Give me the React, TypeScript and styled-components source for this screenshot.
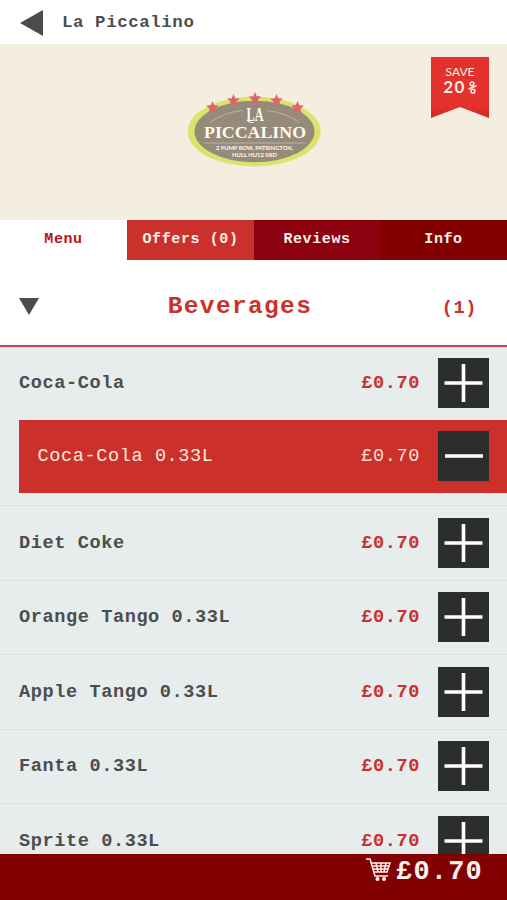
import React from 'react';
import styled, { createGlobalStyle, css } from 'styled-components';

const Global = createGlobalStyle`
  * { box-sizing: border-box; }
  body { margin: 0; background: #fff; }
  button { border: 0; padding: 0; font: inherit; }
`;

const Screen = styled.div`
  width: 507px;
  height: 900px;
  display: flex;
  flex-direction: column;
  overflow: hidden;
  font-family: "Liberation Mono", monospace;
  font-weight: 700;
  color: #4b4e4d;
`;

const Header = styled.header`
  flex: none;
  height: 43.5px;
  padding: 2px 0 0 20px;
  display: flex;
  align-items: center;
  gap: 19px;
  font-size: 17.4px;
  letter-spacing: 0.6px;
  background: #fff;
`;

const BackIcon = styled.svg`
  width: 23px;
  height: 26px;
`;

const Hero = styled.section`
  flex: none;
  height: 176px;
  background: #f4eee0;
  position: relative;
`;

const Logo = styled.svg`
  display: block;
  width: 150px;
  height: 90px;
  margin: 0 auto;
  transform: translate(1.5px, 41.5px);
`;

const Ribbon = styled.div`
  position: absolute;
  top: 13.5px;
  right: 18px;
  width: 58px;
  height: 61px;
  padding-top: 8px;
  display: flex;
  flex-direction: column;
  align-items: center;
  color: #ffece4;
  background: linear-gradient(#e3322d 78%, #d02a27);
  clip-path: polygon(0 0, 100% 0, 100% 100%, 50% 82%, 0 100%);
`;

const RibbonLabel = styled.span`
  font: 400 12px/14px Lato, "Noto Sans", sans-serif;
`;

const RibbonValue = styled.span`
  display: flex;
  align-items: center;
  gap: 2px;
  margin-top: 1px;
  font: 700 17px/14px Lato, "Noto Sans", sans-serif;
  letter-spacing: 1.5px;
`;

const PercentIcon = styled.svg`
  width: 9px;
  height: 13px;
`;

const Tabs = styled.nav`
  flex: none;
  height: 40.5px;
  display: grid;
  grid-template-columns: 127px 127px 126px 127px;
`;

const Tab = styled.button<{ $bg: string; $active?: boolean }>`
  background: ${p => p.$bg};
  color: ${p => (p.$active ? '#bd1024' : '#fff0eb')};
  font-family: inherit;
  font-size: 15px;
  letter-spacing: 0.6px;
  font-weight: 700;
  padding-bottom: 1px;
`;

const Category = styled.section`
  flex: none;
  height: 87px;
  padding: 9px 30px 0 19px;
  display: grid;
  grid-template-columns: 60px 1fr 48px;
  align-items: center;
  background: #fff;
  border-bottom: 2px solid #c74554;
  color: #cb312b;
`;

const DownIcon = styled.svg`
  width: 20px;
  height: 18px;
`;

const CategoryTitle = styled.h1`
  margin: 0;
  padding-right: 28px;
  text-align: center;
  font-size: 24.5px;
  letter-spacing: 1.35px;
  line-height: 30px;
`;

const Count = styled.span`
  font-size: 18.6px;
  letter-spacing: 0.6px;
  text-align: right;
  margin-top: 3px;
  white-space: nowrap;
`;

const List = styled.main`
  flex: 1;
  min-height: 0;
  overflow: hidden;
  background: #e7ecec;
`;

const Item = styled.section`
  border-bottom: 1.5px solid #dce0e1;
`;

const Row = styled.div<{ $selected?: boolean; $first?: boolean }>`
  display: grid;
  grid-template-columns: 1fr auto 51px;
  align-items: center;
  column-gap: 18px;
  height: ${p => (p.$first ? '73px' : '73.5px')};
  padding: 0 18px ${p => (p.$first ? '1px' : '0')} 19px;
  font-size: 18.6px;
  letter-spacing: 0.58px;
  ${p => p.$selected && css`
    margin: 0 0 12px 19px;
    padding-left: 18.5px;
    background: #cb302b;
    color: #ffe8e0;
    font-weight: 400;
  `}
`;

const Name = styled.span`
  padding-top: 1px;
  white-space: nowrap;
`;

const Price = styled.span<{ $light?: boolean }>`
  padding-top: 1px;
  color: ${p => (p.$light ? '#ffdfd6' : '#cb312b')};
`;

const Quantity = styled.button`
  width: 51px;
  height: 50px;
  background: #2c2d2d;
  display: flex;
  align-items: center;
  justify-content: center;
`;

const Footer = styled.footer`
  flex: none;
  height: 46px;
  padding: 3px 24px 0 0;
  display: flex;
  justify-content: flex-end;
  gap: 5px;
  background: #820001;
  color: #fff2ee;
`;

const CartIcon = styled.svg`
  width: 25px;
  height: 24px;
  margin-top: 1px;
`;

const Total = styled.span`
  font-size: 27px;
  letter-spacing: 1.2px;
  line-height: 31px;
`;

const starPoints = '0,-6.5 1.8,-2.2 6.4,-2 2.9,1.2 4,5.8 0,3.4 -4,5.8 -2.9,1.2 -6.4,-2 -1.8,-2.2';
const stars = [[32, 22], [53, 15], [74.5, 13], [96, 15], [117, 22]];

const Brand = () => (
  <Logo viewBox="0 0 150 90">
    <ellipse cx="73.7" cy="46" rx="66.5" ry="35" fill="#dbe36d" />
    <ellipse cx="74" cy="46" rx="60" ry="30.8" fill="#968b7b" />
    <path d="M29 37 Q43 27 62 25 M86 25 Q105 27 119 37 M24 57.5H125" fill="none" stroke="#c5baa9" strokeWidth=".8" />
    {stars.map(([x, y]) => (
      <polygon key={x} points={starPoints} transform={`translate(${x} ${y})`} fill="#dc6670" />
    ))}
    <g fill="#fffaf0" textAnchor="middle" fontWeight="700">
      <text x="74.5" y="35" fontFamily="Liberation Serif, serif" fontSize="18" textLength="17" lengthAdjust="spacingAndGlyphs">LA</text>
      <path d="M67 34 Q67 37.5 73 37" fill="none" stroke="#fffaf0" strokeWidth="1" />
      <text x="74.5" y="52.5" fontFamily="Liberation Serif, serif" fontSize="17.5" textLength="102" lengthAdjust="spacingAndGlyphs">PICCALINO</text>
      <text x="74" y="64.5" fontFamily="Lato, sans-serif" fontSize="6.2" textLength="77" lengthAdjust="spacingAndGlyphs">2 PUMP ROW, PATRINGTON,</text>
      <text x="74" y="71.5" fontFamily="Lato, sans-serif" fontSize="6.2" textLength="45" lengthAdjust="spacingAndGlyphs">HULL HU12 0RD</text>
    </g>
  </Logo>
);

const QuantityButton = ({ minus = false }: { minus?: boolean }) => (
  <Quantity aria-label={minus ? 'Remove' : 'Add'}>
    <svg width="51" height="50" viewBox="0 0 51 50">
      <path d={minus ? 'M7 25H45' : 'M6.5 25H44.5M25.5 6V44'} stroke="#fff" strokeWidth="3.6" />
    </svg>
  </Quantity>
);

const drinks = ['Diet Coke', 'Orange Tango 0.33L', 'Apple Tango 0.33L', 'Fanta 0.33L', 'Sprite 0.33L'];

export default function App() {
  return (
    <Screen>
      <Global />
      <Header>
        <BackIcon viewBox="0 0 23 26"><path d="M0 13L23 0V26Z" fill="#4c4c4c" /></BackIcon>
        <span>La Piccalino</span>
      </Header>
      <Hero>
        <Brand />
        <Ribbon>
          <RibbonLabel>SAVE</RibbonLabel>
          <RibbonValue>
            20
            <PercentIcon viewBox="0 0 9 13" role="img" aria-label="%">
              <g fill="none" stroke="#ffece4" strokeWidth="1.5">
                <circle cx="4" cy="2.8" r="1.9" />
                <circle cx="5" cy="10.2" r="1.9" />
                <path d="M.5 8L8.5 4.8" />
              </g>
            </PercentIcon>
          </RibbonValue>
        </Ribbon>
      </Hero>
      <Tabs>
        <Tab $bg="#fff" $active>Menu</Tab>
        <Tab $bg="#cb312b">Offers (0)</Tab>
        <Tab $bg="#8d000f">Reviews</Tab>
        <Tab $bg="#820001">Info</Tab>
      </Tabs>
      <Category>
        <DownIcon viewBox="0 0 20 18"><path d="M0 0H20L10 17Z" fill="#4c4c4c" /></DownIcon>
        <CategoryTitle>Beverages</CategoryTitle>
        <Count>(1)</Count>
      </Category>
      <List>
        <Item>
          <Row $first>
            <Name>Coca-Cola</Name><Price>£0.70</Price><QuantityButton />
          </Row>
          <Row $selected $first>
            <Name>Coca-Cola 0.33L</Name><Price $light>£0.70</Price><QuantityButton minus />
          </Row>
        </Item>
        {drinks.map(name => (
          <Item key={name}>
            <Row><Name>{name}</Name><Price>£0.70</Price><QuantityButton /></Row>
          </Item>
        ))}
      </List>
      <Footer>
        <CartIcon viewBox="0 0 25 24" fill="none" stroke="#fff2ee" strokeWidth="1.5">
          <path d="M0 1H4L9 18H22M5 5H24L21 14H8M6 8H23M7 11H22M10 5L12 14M15 5V14M20 5L18 14" />
          <g fill="#fff2ee"><circle cx="11.5" cy="21" r="1.3" /><circle cx="18" cy="21" r="1.3" /></g>
        </CartIcon>
        <Total>£0.70</Total>
      </Footer>
    </Screen>
  );
}
